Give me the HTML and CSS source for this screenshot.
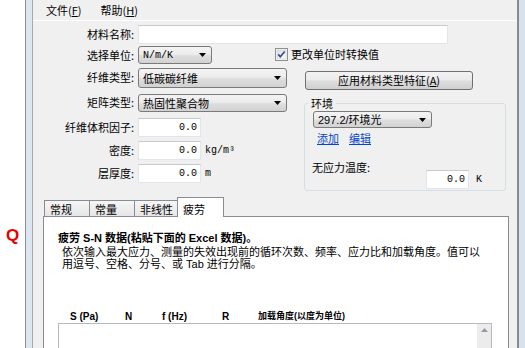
FILE: index.html
```html
<!DOCTYPE html>
<html lang="zh-CN">
<head>
  <meta charset="UTF-8">
  <title>材料属性</title>
  <link rel="stylesheet" href="styles.css">
</head>
<body>
<div class="screen">
  <div class="desk"><span class="mark">Q</span></div>
  <div class="frame-left"></div>

  <div class="window">
    <div class="menubar">
      <span>文件(<u>F</u>)</span>
      <span>帮助(<u>H</u>)</span>
    </div>

    <div class="props">
      <div class="lbl">材料名称:</div>
      <div class="field name"></div>

      <div class="lbl">选择单位:</div>
      <div class="units">
        <div class="combo small">
          <span class="mono">N/m/K</span>
          <svg width="7" height="4" viewBox="0 0 7 4"><path d="M0 0h7L3.5 4z" fill="#000"/></svg>
        </div>
        <label class="check">
          <svg width="13" height="13" viewBox="0 0 13 13">
            <defs>
              <linearGradient id="cb" x1="0" y1="0" x2="1" y2="1">
                <stop offset="0" stop-color="#dcdcdc"/>
                <stop offset="1" stop-color="#ffffff"/>
              </linearGradient>
            </defs>
            <rect x="0.5" y="0.5" width="12" height="12" fill="#fff" stroke="#8e8f8f"/>
            <rect x="2" y="2" width="9" height="9" fill="url(#cb)" stroke="#c2c6cc" stroke-width="0.6"/>
            <path d="M3.2 6.4l2.1 2.4 4.4-5.4" fill="none" stroke="#344a8e" stroke-width="1.6"/>
          </svg>
          <span>更改单位时转换值</span>
        </label>
      </div>

      <div class="lbl">纤维类型:</div>
      <div class="combo wide tall">
        <span>低碳碳纤维</span>
        <svg width="7" height="4" viewBox="0 0 7 4"><path d="M0 0h7L3.5 4z" fill="#000"/></svg>
      </div>
      <div class="apply">应用材料类型特征(<u>A</u>)</div>

      <div class="lbl">矩阵类型:</div>
      <div class="combo wide low">
        <span>热固性聚合物</span>
        <svg width="7" height="4" viewBox="0 0 7 4"><path d="M0 0h7L3.5 4z" fill="#000"/></svg>
      </div>

      <fieldset class="env">
        <legend>环境</legend>
        <div class="combo envsel">
          <span class="latin">297.2/环境光</span>
          <svg width="7" height="4" viewBox="0 0 7 4"><path d="M0 0h7L3.5 4z" fill="#000"/></svg>
        </div>
        <div class="links">
          <a href="#">添加</a>
          <a href="#">编辑</a>
        </div>
        <div class="temp">
          <span>无应力温度:</span>
          <div class="field num tempval">0.0</div>
          <span class="unit k">K</span>
        </div>
      </fieldset>

      <div class="lbl low">纤维体积因子:</div>
      <div class="ctl low"><div class="field num">0.0</div></div>

      <div class="lbl low">密度:</div>
      <div class="ctl low withunit"><div class="field num">0.0</div><span class="unit">kg/m³</span></div>

      <div class="lbl low">层厚度:</div>
      <div class="ctl low withunit"><div class="field num">0.0</div><span class="unit">m</span></div>
    </div>

    <div class="tabs">
      <div class="tab t1">常规</div>
      <div class="tab t2">常量</div>
      <div class="tab t3">非线性</div>
      <div class="tab active">疲劳</div>
    </div>

    <div class="panel">
      <div class="title">疲劳 S-N 数据(粘贴下面的 Excel 数据)。</div>
      <div class="desc">
        依次输入最大应力、测量的失效出现前的循环次数、频率、应力比和加载角度。值可以<br>
        用逗号、空格、分号、或 Tab 进行分隔。
      </div>
      <div class="cols">
        <span class="c1">S (Pa)</span>
        <span class="c2">N</span>
        <span class="c3">f (Hz)</span>
        <span class="c4">R</span>
        <span class="c5">加载角度(以度为单位)</span>
      </div>
      <div class="datagrid">
        <div class="scroll">
          <svg width="7" height="4" viewBox="0 0 7 4"><path d="M0 4h7L3.5 0z" fill="#9a9a9a"/></svg>
        </div>
      </div>
    </div>
  </div>

  <div class="frame-right"></div>
</div>
</body>
</html>
```

FILE: styles.css
```css
* {
  box-sizing: border-box;
}

body {
  margin: 0;
  font-family: "Noto Sans CJK SC", "Noto Sans", sans-serif;
  font-size: 11px;
  color: #000;
  background: #fff;
}

.screen {
  display: flex;
  width: 525px;
  height: 348px;
  overflow: hidden;
}

.desk {
  width: 25px;
  flex: none;
}

.mark {
  display: block;
  margin-top: 226px;
  padding-left: 6px;
  font: bold 17px/20px "Liberation Sans", Arial, sans-serif;
  color: #e60000;
}

.frame-left {
  width: 8px;
  flex: none;
  background: #dce6f1;
  border-left: 1px solid #8e8e8e;
  border-right: 1px solid #a9a9a9;
}

.frame-right {
  width: 8px;
  flex: none;
  background: #d8e2ee;
  border-left: 2px solid #8a8a8a;
}

.window {
  width: 484px;
  flex: none;
  background: #f0f0f0;
}

/* menu */
.menubar {
  height: 21px;
  border-bottom: 1px solid #fff;
  padding: 4px 0 0 13px;
  display: flex;
  gap: 19px;
  line-height: 12px;
}

/* top form */
.props {
  display: grid;
  grid-template-columns: 105px 149px 17px 202px;
  grid-template-rows: 21px 22px 25px 24px 23px 23px 23px;
  padding-top: 4px;
}

.lbl {
  grid-column: 1;
  text-align: right;
  padding-right: 4px;
  line-height: 19px;
  white-space: nowrap;
}

.ctl {
  grid-column: 2 / 4;
}

.low {
  padding-top: 1px;
}

.field {
  height: 19px;
  background: #fff;
  border: 1px solid #e2e6ea;
  border-top-color: #c5cad0;
}

.name {
  grid-column: 2 / 5;
  width: 310px;
}

.num {
  width: 63px;
  font: 10px/17px "Liberation Mono", monospace;
  text-align: right;
  padding-right: 3px;
}

.withunit {
  display: flex;
  align-items: flex-start;
}

.unit {
  font: 10px/19px "Liberation Mono", monospace;
  margin-left: 4px;
}

.combo {
  grid-column: 2;
  height: 18px;
  border: 1px solid #7a7a7a;
  border-radius: 3px;
  background: linear-gradient(#f4f4f4, #ececec 45%, #dedede 55%, #d2d2d2);
  display: flex;
  align-items: center;
  justify-content: space-between;
  padding: 0 5px 0 4px;
  line-height: 16px;
  white-space: nowrap;
}

.combo.small {
  width: 74px;
}

.combo.wide {
  width: 149px;
}

.combo.tall {
  height: 20px;
}

.combo.low {
  margin-top: 1px;
  padding-top: 0;
}

.mono {
  font: 10px "Liberation Mono", monospace;
}

.latin {
  font-family: "Liberation Sans", "Noto Sans CJK SC", sans-serif;
}

.units {
  grid-column: 2 / 5;
  display: flex;
  align-items: flex-start;
}

.check {
  margin-left: 63px;
  display: flex;
  align-items: center;
  gap: 3px;
  height: 16px;
  line-height: 14px;
}

.apply {
  grid-column: 4;
  margin: 3px 0 0 1px;
  width: 168px;
  height: 19px;
  border: 1px solid #707070;
  border-radius: 3px;
  background: linear-gradient(#f2f2f2, #ebebeb 45%, #dddddd 55%, #cfcfcf);
  text-align: center;
  line-height: 17px;
}

/* environment group */
.env {
  grid-column: 4;
  grid-row: 4 / 8;
  margin: 4px 0 0;
  padding: 0;
  width: 202px;
  height: 94px;
  min-width: 0;
  border: 1px solid #d5dfe5;
  border-radius: 3px;
}

.env legend {
  margin-left: 3px;
  padding: 0 3px;
  line-height: 12px;
}

.envsel {
  width: 119px;
  height: 17px;
  margin: 2px 0 0 8px;
}

.links {
  margin: 4px 0 0 12px;
  display: flex;
  gap: 10px;
  line-height: 12px;
}

.links a {
  color: #0645c8;
}

.temp {
  display: flex;
  align-items: flex-start;
  margin: 17px 0 0 7px;
  line-height: 12px;
}

.tempval {
  width: 43px;
  margin: 9px 0 0 auto;
}

.unit.k {
  margin: 9px 23px 0 7px;
}

/* tabs */
.tabs {
  display: flex;
  align-items: flex-end;
  height: 19px;
  margin-top: 11px;
  padding-left: 11px;
}

.tab {
  height: 16px;
  border: 1px solid #898c95;
  border-bottom: none;
  background: linear-gradient(#f6f6f6, #e6e6e6);
  padding: 2px 0 0 5px;
  line-height: 12px;
}

.t1 { width: 46px; }
.t2 { width: 46px; margin-left: -1px; }
.t3 { width: 44px; margin-left: -1px; }

.tab.active {
  width: 47px;
  height: 20px;
  margin: 0 0 -1px -1px;
  padding-top: 5px;
  background: #fff;
  position: relative;
  z-index: 1;
}

/* fatigue panel */
.panel {
  margin-left: 10px;
  width: 466px;
  height: 140px;
  border: 1px solid #898c95;
  background: #fff;
  padding: 14px 0 0 14px;
  font-family: "Liberation Sans", "Noto Sans CJK SC", sans-serif;
}

.title {
  font-weight: bold;
  line-height: 14px;
}

.desc {
  margin-top: 1px;
  padding-left: 4px;
  line-height: 12px;
  white-space: nowrap;
}

.cols {
  display: flex;
  margin-top: 41px;
  padding-left: 12px;
  font: bold 10px/11px "Liberation Sans", "Noto Sans CJK SC", sans-serif;
}

.c1 { width: 55px; }
.c2 { width: 37px; }
.c3 { width: 60px; }
.c4 { width: 36px; }
.c5 { font-size: 9px; }

.datagrid {
  margin-top: 1px;
  width: 434px;
  height: 40px;
  border: 1px solid #b5b9c0;
  display: flex;
  justify-content: flex-end;
}

.scroll {
  width: 14px;
  background: #ececec;
  display: flex;
  justify-content: center;
  padding-top: 4px;
}
```
